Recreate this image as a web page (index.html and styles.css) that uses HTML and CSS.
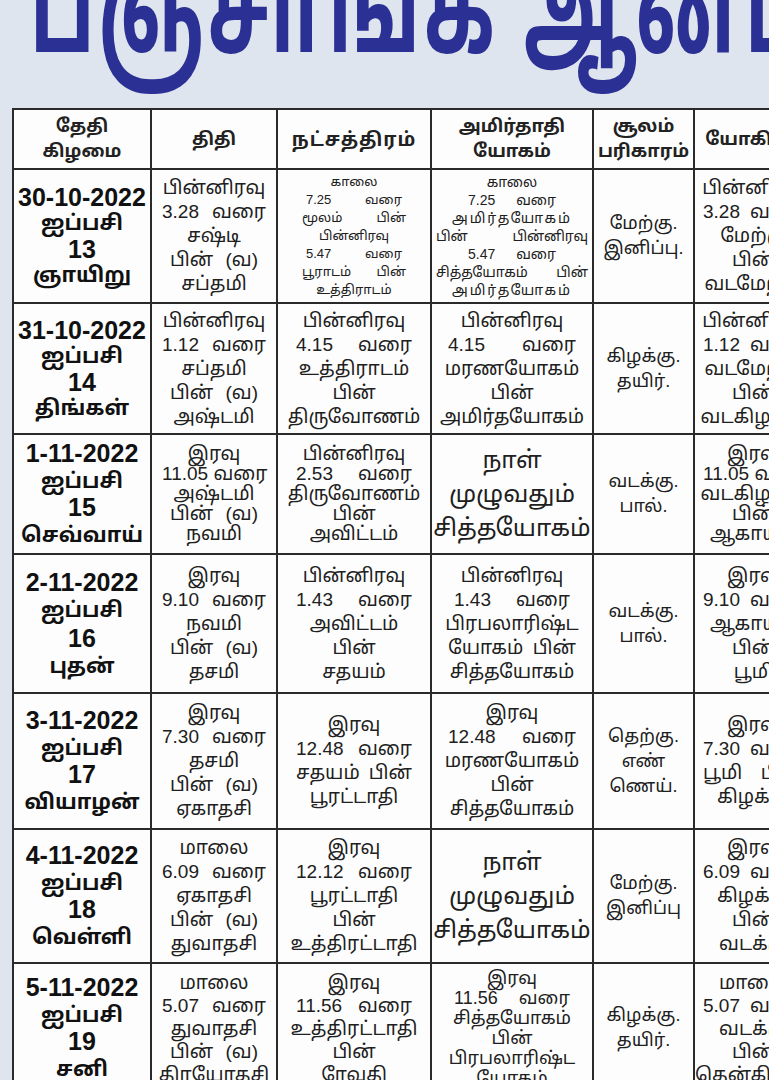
FILE: index.html
```html
<!DOCTYPE html>
<html lang="ta">
<head>
<meta charset="utf-8">
<title>பஞ்சாங்க ஆன்மீகம்</title>
<link rel="stylesheet" href="styles.css">
</head>
<body>
<div class="page">
  <div class="masthead"><h1 class="title">பஞ்சாங்க ஆன்மீகம்</h1></div>
  <table class="panchang">
    <colgroup>
      <col class="c-date"><col class="c-tithi"><col class="c-star"><col class="c-yogam"><col class="c-soolam"><col class="c-yogini">
    </colgroup>
    <thead>
      <tr>
        <th><span>தேதி</span><span>கிழமை</span></th>
        <th><span>திதி</span></th>
        <th><span class="wide">நட்சத்திரம்</span></th>
        <th><span>அமிர்தாதி</span><span>யோகம்</span></th>
        <th><span>சூலம்</span><span>பரிகாரம்</span></th>
        <th><span>யோகினி</span></th>
      </tr>
    </thead>
    <tbody>
      <tr class="r1">
        <td class="date"><span class="num">30-10-2022</span><span>ஐப்பசி</span><span class="num">13</span><span>ஞாயிறு</span></td>
        <td><span>பின்னிரவு</span><span class="j">3.28 வரை</span><span>சஷ்டி</span><span class="j jw">பின் (வ)</span><span>சப்தமி</span></td>
        <td class="small"><span>காலை</span><span class="j jw">7.25 வரை</span><span class="j">மூலம் பின்</span><span>பின்னிரவு</span><span class="j jw">5.47 வரை</span><span class="j">பூராடம் பின்</span><span>உத்திராடம்</span></td>
        <td class="small"><span>காலை</span><span class="j jw">7.25 வரை</span><span class="ls">அமிர்தயோகம்</span><span class="j">பின் பின்னிரவு</span><span class="j jw">5.47 வரை</span><span class="j">சித்தயோகம் பின்</span><span class="ls">அமிர்தயோகம்</span></td>
        <td class="soolam"><span>மேற்கு.</span><span>இனிப்பு.</span></td>
        <td><span>பின்னிரவு</span><span class="j">3.28 வரை</span><span>மேற்கு</span><span>பின்</span><span>வடமேற்கு</span></td>
      </tr>
      <tr class="r2">
        <td class="date"><span class="num">31-10-2022</span><span>ஐப்பசி</span><span class="num">14</span><span>திங்கள்</span></td>
        <td><span>பின்னிரவு</span><span class="j">1.12 வரை</span><span>சப்தமி</span><span class="j jw">பின் (வ)</span><span>அஷ்டமி</span></td>
        <td><span>பின்னிரவு</span><span class="j">4.15 வரை</span><span>உத்திராடம்</span><span>பின்</span><span>திருவோணம்</span></td>
        <td><span>பின்னிரவு</span><span class="j">4.15 வரை</span><span>மரணயோகம்</span><span>பின்</span><span>அமிர்தயோகம்</span></td>
        <td class="soolam"><span>கிழக்கு.</span><span>தயிர்.</span></td>
        <td><span>பின்னிரவு</span><span class="j">1.12 வரை</span><span>வடமேற்கு</span><span>பின்</span><span>வடகிழக்கு</span></td>
      </tr>
      <tr class="r3">
        <td class="date"><span class="num">1-11-2022</span><span>ஐப்பசி</span><span class="num">15</span><span>செவ்வாய்</span></td>
        <td><span>இரவு</span><span class="j">11.05 வரை</span><span>அஷ்டமி</span><span class="j jw">பின் (வ)</span><span>நவமி</span></td>
        <td><span>பின்னிரவு</span><span class="j">2.53 வரை</span><span>திருவோணம்</span><span>பின்</span><span>அவிட்டம்</span></td>
        <td class="big"><span>நாள்</span><span>முழுவதும்</span><span>சித்தயோகம்</span></td>
        <td class="soolam"><span>வடக்கு.</span><span>பால்.</span></td>
        <td><span>இரவு</span><span class="j">11.05 வரை</span><span>வடகிழக்கு</span><span>பின்</span><span>ஆகாயம்</span></td>
      </tr>
      <tr class="r4">
        <td class="date"><span class="num">2-11-2022</span><span>ஐப்பசி</span><span class="num">16</span><span>புதன்</span></td>
        <td><span>இரவு</span><span class="j">9.10 வரை</span><span>நவமி</span><span class="j jw">பின் (வ)</span><span>தசமி</span></td>
        <td><span>பின்னிரவு</span><span class="j">1.43 வரை</span><span>அவிட்டம்</span><span>பின்</span><span>சதயம்</span></td>
        <td><span>பின்னிரவு</span><span class="j jw">1.43 வரை</span><span>பிரபலாரிஷ்ட</span><span class="j">யோகம் பின்</span><span>சித்தயோகம்</span></td>
        <td class="soolam"><span>வடக்கு.</span><span>பால்.</span></td>
        <td><span>இரவு</span><span class="j">9.10 வரை</span><span>ஆகாயம்</span><span>பின்</span><span>பூமி</span></td>
      </tr>
      <tr class="r5">
        <td class="date"><span class="num">3-11-2022</span><span>ஐப்பசி</span><span class="num">17</span><span>வியாழன்</span></td>
        <td><span>இரவு</span><span class="j">7.30 வரை</span><span>தசமி</span><span class="j jw">பின் (வ)</span><span>ஏகாதசி</span></td>
        <td><span>இரவு</span><span class="j">12.48 வரை</span><span class="j">சதயம் பின்</span><span>பூரட்டாதி</span></td>
        <td><span>இரவு</span><span class="j">12.48 வரை</span><span>மரணயோகம்</span><span>பின்</span><span>சித்தயோகம்</span></td>
        <td class="soolam"><span>தெற்கு.</span><span>எண்</span><span>ணெய்.</span></td>
        <td><span>இரவு</span><span class="j">7.30 வரை</span><span class="j">பூமி பின்</span><span>கிழக்கு</span></td>
      </tr>
      <tr class="r6">
        <td class="date"><span class="num">4-11-2022</span><span>ஐப்பசி</span><span class="num">18</span><span>வெள்ளி</span></td>
        <td><span>மாலை</span><span class="j">6.09 வரை</span><span>ஏகாதசி</span><span class="j jw">பின் (வ)</span><span>துவாதசி</span></td>
        <td><span>இரவு</span><span class="j">12.12 வரை</span><span>பூரட்டாதி</span><span>பின்</span><span>உத்திரட்டாதி</span></td>
        <td class="big"><span>நாள்</span><span>முழுவதும்</span><span>சித்தயோகம்</span></td>
        <td class="soolam"><span>மேற்கு.</span><span>இனிப்பு</span></td>
        <td><span>இரவு</span><span class="j">6.09 வரை</span><span>கிழக்கு</span><span>பின்</span><span>வடக்கு</span></td>
      </tr>
      <tr class="r7">
        <td class="date"><span class="num">5-11-2022</span><span>ஐப்பசி</span><span class="num">19</span><span>சனி</span></td>
        <td><span>மாலை</span><span class="j">5.07 வரை</span><span>துவாதசி</span><span class="j jw">பின் (வ)</span><span>திரயோதசி</span></td>
        <td><span>இரவு</span><span class="j">11.56 வரை</span><span>உத்திரட்டாதி</span><span>பின்</span><span>ரேவதி</span></td>
        <td class="mid"><span>இரவு</span><span class="j jw">11.56 வரை</span><span>சித்தயோகம்</span><span>பின்</span><span>பிரபலாரிஷ்ட</span><span>யோகம்</span></td>
        <td class="soolam"><span>கிழக்கு.</span><span>தயிர்.</span></td>
        <td><span>மாலை</span><span class="j">5.07 வரை</span><span>வடக்கு</span><span>பின்</span><span>தென்கிழக்கு</span></td>
      </tr>
    </tbody>
  </table>
</div>
</body>
</html>
```
FILE: styles.css
```css
html, body {
  margin: 0;
  padding: 0;
}
body {
  background: #dfe5ee;
  overflow: hidden;
  font-family: "Liberation Sans", "Noto Sans Tamil", "Lohit Tamil", "Noto Sans", sans-serif;
  color: #1e1e1e;
}
.page {
  width: 769px;
  height: 1080px;
  overflow: hidden;
}
.masthead {
  height: 108px;
  overflow: hidden;
}
.title {
  margin: -68px 0 0 30px;
  font-size: 132px;
  line-height: 150px;
  font-weight: 700;
  color: #2b3194;
  white-space: nowrap;
  letter-spacing: 6px;
  transform: scaleX(0.59);
  transform-origin: left center;
}
.panchang {
  margin-left: 12px;
  border-collapse: collapse;
  table-layout: fixed;
  width: 800px;
  background: #fdfdfd;
}
.c-date { width: 138px; }
.c-tithi { width: 126px; }
.c-star { width: 154px; }
.c-yogam { width: 162px; }
.c-soolam { width: 101px; }
.c-yogini { width: 119px; }
.panchang th,
.panchang td {
  --lh: 24px;
  border: 2px solid #2a2a2a;
  text-align: center;
  vertical-align: middle;
  padding: 0;
  overflow: hidden;
}
.panchang th span,
.panchang td span {
  display: block;
  height: var(--lh);
  line-height: var(--lh);
  white-space: nowrap;
}
.panchang th {
  --lh: 25px;
  height: 58px;
  font-size: 18px;
  font-weight: 700;
  color: #222;
}
.panchang th .wide {
  letter-spacing: 1px;
  font-size: 19px;
}
.panchang td {
  font-size: 19px;
  color: #202020;
}
.panchang td span.j {
  text-align: justify;
  text-align-last: justify;
}
.panchang td:nth-child(2) span.j { padding: 0 10px; }
.panchang td:nth-child(2) span.jw { padding: 0 18px; }
.panchang td:nth-child(3) span.j { padding: 0 18px; }
.panchang td:nth-child(4) span.j { padding: 0 16px; }
.panchang td:nth-child(4) span.jw { padding: 0 22px; }
.panchang td:nth-child(6) span.j { padding: 0 8px; }

.panchang td.date {
  --lh: 26px;
  font-size: 21px;
  font-weight: 700;
  color: #111;
}
.panchang td.date .num {
  font-size: 25px;
}
.panchang td.small {
  --lh: 18px;
  font-size: 13px;
}
.panchang td:nth-child(3).small span.j { padding: 0 24px; }
.panchang td:nth-child(3).small span.jw { padding: 0 28px; }
.panchang td:nth-child(4).small {
  font-size: 14px;
}
.panchang td:nth-child(4).small span.j { padding: 0 4px; }
.panchang td:nth-child(4).small span.jw { padding: 0 36px; }
.panchang td.small span.ls {
  letter-spacing: 2px;
}
.panchang td.mid {
  --lh: 20px;
  font-size: 18px;
}
.panchang td.big {
  --lh: 34px;
  font-size: 24px;
}
.panchang td.soolam {
  --lh: 25px;
  font-size: 18px;
}
.r3 td { --lh: 20px; }
.panchang .r3 td.date { --lh: 27px; }
.panchang .r4 td.date { --lh: 28px; }
.panchang .r5 td.date { --lh: 27px; }
.panchang .r6 td.date { --lh: 27px; }
.panchang .r7 td.date { --lh: 27px; }
.r7 td { --lh: 23px; }

.r1 td { height: 132px; }
.r2 td { height: 129px; }
.r3 td { height: 118px; }
.r4 td { height: 137px; }
.r5 td { height: 134px; }
.r6 td { height: 132px; }
.r7 td { height: 128px; }
```
